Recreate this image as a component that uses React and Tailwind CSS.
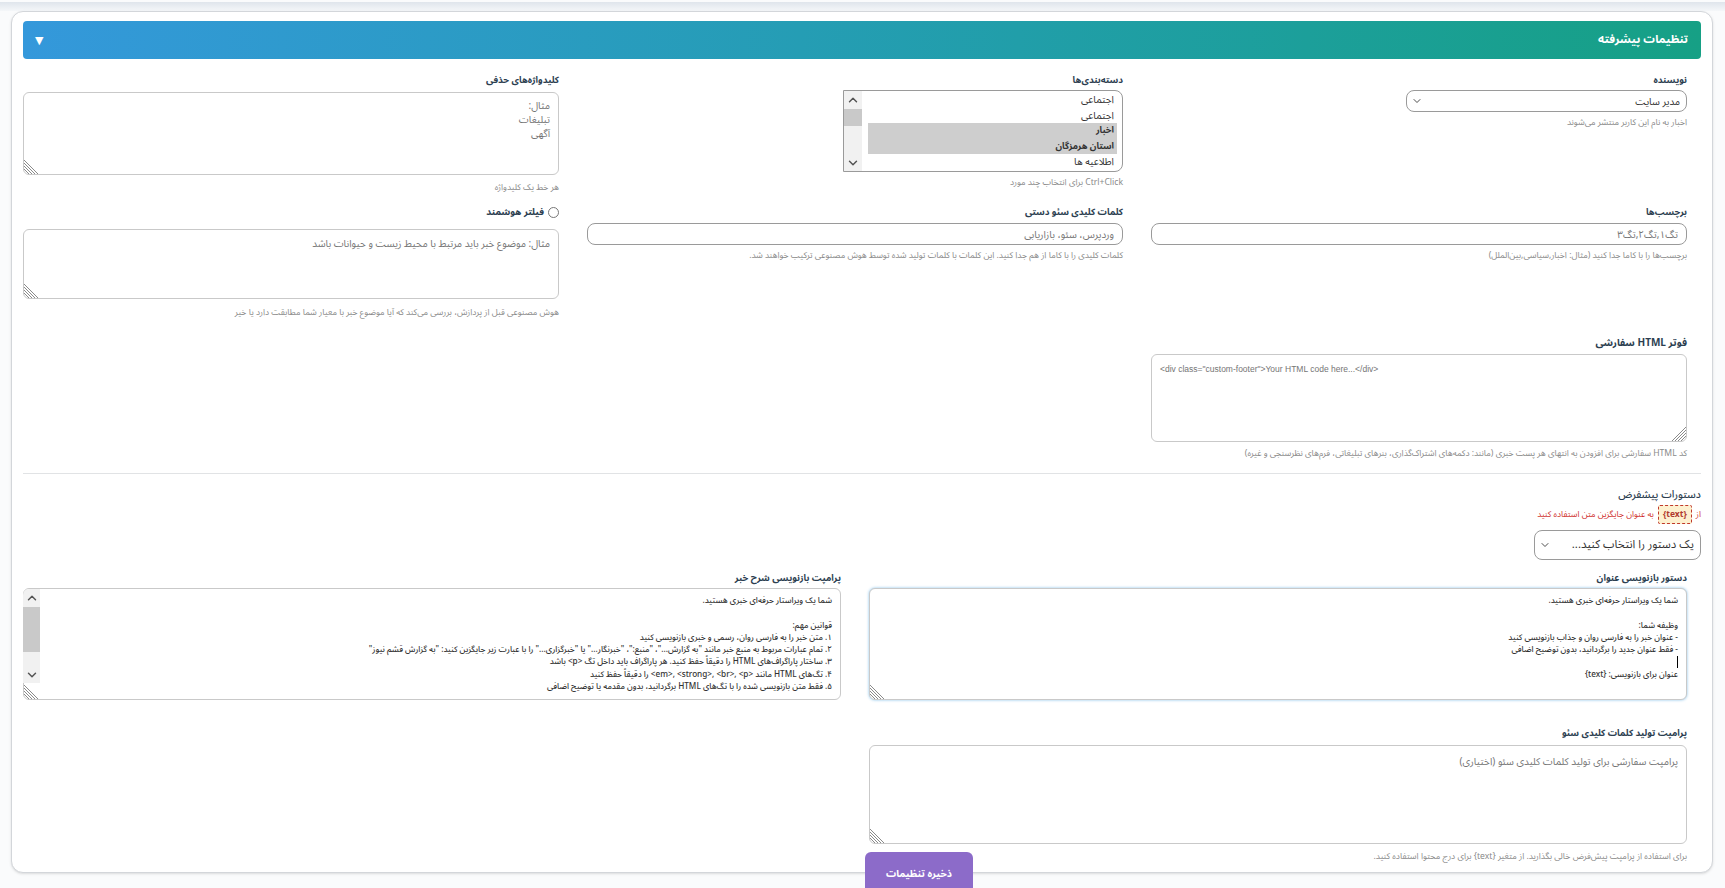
import React from "react";
import { ChevronDown, ChevronUp } from "lucide-react";

const font = "[font-family:'Noto_Sans_Arabic','Vazirmatn','DejaVu_Sans','Liberation_Sans',sans-serif]";

function Label({ children, className = "" }) {
  return <div className={`h-[14px] leading-[14px] text-[9.2px] font-bold text-[#2c3e50] whitespace-nowrap ${className}`}>{children}</div>;
}
function Hint({ children, className = "" }) {
  return <div className={`h-[12px] leading-[12px] text-[8.6px] text-[#8a8a8a] whitespace-nowrap ${className}`}>{children}</div>;
}
function Pill({ children, className = "" }) {
  return (
    <div className={`flex items-center justify-between border border-[#9a9a9a] rounded-lg bg-white pr-[6px] pl-[4px] text-[#333] ${className}`}>
      <span>{children}</span>
      <ChevronDown size={12} strokeWidth={1.75} className="text-[#333]" />
    </div>
  );
}
function Hatch({ right = false }) {
  const lines = [0, 3, 6, 9];
  return (
    <svg width="14" height="14" viewBox="0 0 14 14" className={`pointer-events-none absolute bottom-[1px] ${right ? "right-[1px]" : "left-[1px]"}`}>
      {lines.map((a) =>
        right ? (
          <line key={a} x1="14" y1={a} x2={a} y2="14" stroke="#8a8a8a" strokeWidth="1" />
        ) : (
          <line key={a} x1="0" y1={a} x2={14 - a} y2="14" stroke="#8a8a8a" strokeWidth="1" />
        )
      )}
    </svg>
  );
}
function TextArea({ className = "", wrap = "", children, right = false, ...props }) {
  return (
    <div className={`relative ${wrap}`}>
      <textarea
        readOnly
        dir={right ? "ltr" : "rtl"}
        className={`block w-full resize-none overflow-hidden border border-[#c9c9c9] rounded-md bg-white outline-none text-[#333] placeholder:text-[#757575] px-2 ${className}`}
        {...props}
      />
      {children}
      <Hatch right={right} />
    </div>
  );
}
function Scrollbar({ className = "", thumb = "" }) {
  return (
    <div className={`flex flex-col bg-[#f1f1f1] ${className}`}>
      <div className="flex h-[18px] items-center justify-center">
        <ChevronUp size={14} strokeWidth={2.5} className="text-[#555]" />
      </div>
      <div className={`w-full bg-[#c9c9c9] ${thumb}`} />
      <div className="flex-1" />
      <div className="flex h-[17px] items-center justify-center">
        <ChevronDown size={14} strokeWidth={2.5} className="text-[#555]" />
      </div>
    </div>
  );
}

const descPrompt = `شما یک ویراستار حرفه‌ای خبری هستید.

قوانین مهم:
۱. متن خبر را به فارسی روان، رسمی و خبری بازنویسی کنید
۲. تمام عبارات مربوط به منبع خبر مانند "به گزارش..."، "منبع:"، "خبرنگار..." یا "خبرگزاری..." را با عبارت زیر جایگزین کنید: "به گزارش قشم نیوز"
۳. ساختار پاراگراف‌های HTML را دقیقاً حفظ کنید. هر پاراگراف باید داخل تگ <p> باشد
۴. تگ‌های HTML مانند <em>, <strong>, <br>, <p> را دقیقاً حفظ کنید
۵. فقط متن بازنویسی شده را با تگ‌های HTML برگردانید، بدون مقدمه یا توضیح اضافی`;

const titlePrompt = `شما یک ویراستار حرفه‌ای خبری هستید.

وظیفه شما:
- عنوان خبر را به فارسی روان و جذاب بازنویسی کنید
- فقط عنوان جدید را برگردانید، بدون توضیح اضافی

عنوان برای بازنویسی: {text}`;

const inputCls = "mt-[4px] block h-[22px] w-full rounded-lg border border-[#9a9a9a] bg-white px-2 text-[10px] outline-none placeholder:text-[#757575]";
const optionCls = "h-[15.5px] pr-[3px] leading-[15.5px]";

export default function App() {
  return (
    <div dir="rtl" className={`relative h-[888px] w-[1725px] overflow-hidden bg-[#fafbfc] ${font}`}>
      <div className="mt-[2px] h-[9px] bg-gradient-to-b from-[#dfe5ec] to-[#f5f7f9]" />
      <div className="mr-[12px] ml-[11px] h-[862px] rounded-xl border border-[#d3d6da] bg-white px-[11px] pt-[9px] shadow-sm">
        <div className="flex h-[38px] items-center justify-between rounded-[4px] bg-gradient-to-l from-[#16a085] to-[#3498db] pr-[13px] pl-[12px] text-white">
          <span className="text-[11.5px] font-bold">تنظیمات پیشرفته</span>
          <span className="text-[11px] leading-none">▼</span>
        </div>

        <div className="pr-[14px]">
          <div className="mt-[14px] grid h-[132px] grid-cols-3 gap-x-[28px]">
            <div>
              <Label>نویسنده</Label>
              <Pill className="mt-[3px] h-[22px] w-[281px] text-[10px]">مدیر سایت</Pill>
              <Hint className="mt-[4px]">اخبار به نام این کاربر منتشر می‌شوند</Hint>
            </div>
            <div>
              <Label>دسته‌بندی‌ها</Label>
              <div className="mt-[3px] flex h-[82px] w-[280px] overflow-hidden rounded-r-lg border border-[#9a9a9a] bg-white text-[10px] text-[#333]">
                <div className="flex-1 overflow-hidden pt-[1px] pr-[5px] pl-[6px]">
                  <div className={optionCls}>اجتماعی</div>
                  <div className={optionCls}>اجتماعی</div>
                  <div className={`${optionCls} bg-[#cecece] text-[9px] font-bold`}>اخبار</div>
                  <div className={`${optionCls} bg-[#cecece] text-[9px] font-bold`}>استان هرمزگان</div>
                  <div className={optionCls}>اطلاعیه ها</div>
                </div>
                <Scrollbar className="w-[18px]" thumb="h-[17px]" />
              </div>
              <Hint className="mt-[4px]">Ctrl+Click برای انتخاب چند مورد</Hint>
            </div>
            <div>
              <Label>کلیدواژه‌های حذفی</Label>
              <TextArea wrap="mt-[5px]" className="h-[83px] pt-[6px] text-[10px] leading-[14px]" placeholder={"مثال:\nتبلیغات\nآگهی"} />
              <Hint className="mt-[6px]">هر خط یک کلیدواژه</Hint>
            </div>
          </div>

          <div className="grid h-[131px] grid-cols-3 gap-x-[28px]">
            <div>
              <Label>برچسب‌ها</Label>
              <input readOnly placeholder="تگ۱,تگ۲,تگ۳" className={inputCls} />
              <Hint className="mt-[4px]">برچسب‌ها را با کاما جدا کنید (مثال: اخبار,سیاسی,بین‌الملل)</Hint>
            </div>
            <div>
              <Label>کلمات کلیدی سئو دستی</Label>
              <input readOnly placeholder="وردپرس، سئو، بازاریابی" className={inputCls} />
              <Hint className="mt-[4px]">کلمات کلیدی را با کاما از هم جدا کنید. این کلمات با کلمات تولید شده توسط هوش مصنوعی ترکیب خواهند شد.</Hint>
            </div>
            <div>
              <div className="flex h-[14px] items-center gap-[4px]">
                <span className="h-[11px] w-[11px] rounded-full border border-[#777] bg-white" />
                <Label className="text-[9.5px]">فیلتر هوشمند</Label>
              </div>
              <TextArea wrap="mt-[10px]" className="h-[70px] pt-[6px] text-[10px]" placeholder="مثال: موضوع خبر باید مرتبط با محیط زیست و حیوانات باشد" />
              <Hint className="mt-[7px]">هوش مصنوعی قبل از پردازش، بررسی می‌کند که آیا موضوع خبر با معیار شما مطابقت دارد یا خیر</Hint>
            </div>
          </div>

          <div className="grid grid-cols-3 gap-x-[28px]">
            <div>
              <Label className="text-[10px]">فوتر HTML سفارشی</Label>
              <TextArea
                right
                wrap="mt-[4px]"
                placeholder={'<div class="custom-footer">Your HTML code here...</div>'}
                className="h-[88px] py-2 text-[8.5px] [font-family:'Liberation_Sans',sans-serif]"
              />
              <Hint className="mt-[5px]">کد HTML سفارشی برای افزودن به انتهای هر پست خبری (مانند: دکمه‌های اشتراک‌گذاری، بنرهای تبلیغاتی، فرم‌های نظرسنجی و غیره)</Hint>
            </div>
          </div>
        </div>

        <div className="mt-[14px] h-[1px] bg-[#e1e3e5]" />

        <div className="mt-[14px] h-[14px] text-[10.5px] leading-[14px] font-medium text-[#2c3e50]">دستورات پیشفرض</div>
        <div className="mt-[3px] flex h-[19px] items-center gap-[4px] text-[8.5px] text-[#d0312d]">
          <span>از</span>
          <span className="flex h-[19px] w-[34px] items-center justify-center rounded-[2px] border border-dashed border-[#c0392b] bg-[#fdf0cf] text-[8.5px] font-bold text-[#b03a2e]">{"{text}"}</span>
          <span>به عنوان جایگزین متن استفاده کنید</span>
        </div>

        <Pill className="mt-[6px] h-[30px] w-[167px] text-[11.5px]">یک دستور را انتخاب کنید...</Pill>

        <div className="pr-[14px]">
          <div className="mt-[11px] grid grid-cols-2 gap-x-[28px]">
            <div>
              <Label>دستور بازنویسی عنوان</Label>
              <TextArea
                wrap="mt-[3px]"
                className="h-[112px] border-[#3498db] pt-[6px] text-[8.2px] leading-[12.3px] font-medium text-[#222] shadow-[0_0_3px_rgba(52,152,219,0.6)]"
                defaultValue={titlePrompt}
              >
                <span className="absolute top-[68px] right-[9px] h-[12px] w-[1px] bg-black" />
              </TextArea>
            </div>
            <div>
              <Label>پرامپت بازنویسی شرح خبر</Label>
              <TextArea
                wrap="mt-[3px]"
                className="h-[112px] pt-[6px] text-[8.2px] leading-[12.3px] font-medium text-[#222]"
                defaultValue={descPrompt}
              >
                <Scrollbar className="absolute top-[1px] left-[0px] h-[94px] w-[17px] rounded-tl-md" thumb="h-[45px]" />
              </TextArea>
            </div>
          </div>

          <div className="mt-[26px] grid grid-cols-2 gap-x-[28px]">
            <div>
              <Label>پرامپت تولید کلمات کلیدی سئو</Label>
              <TextArea wrap="mt-[5px]" className="h-[99px] pt-2 text-[10px]" placeholder="پرامپت سفارشی برای تولید کلمات کلیدی سئو (اختیاری)" />
              <Hint className="mt-[6px]">برای استفاده از پرامپت پیش‌فرض خالی بگذارید. از متغیر {"{text}"} برای درج محتوا استفاده کنید.</Hint>
            </div>
          </div>
        </div>
      </div>
      <button className="absolute top-[852px] left-[865px] h-[42px] w-[108px] rounded-md bg-[#8c6bc9] text-[10px] font-bold text-white">ذخیره تنظیمات</button>
    </div>
  );
}
